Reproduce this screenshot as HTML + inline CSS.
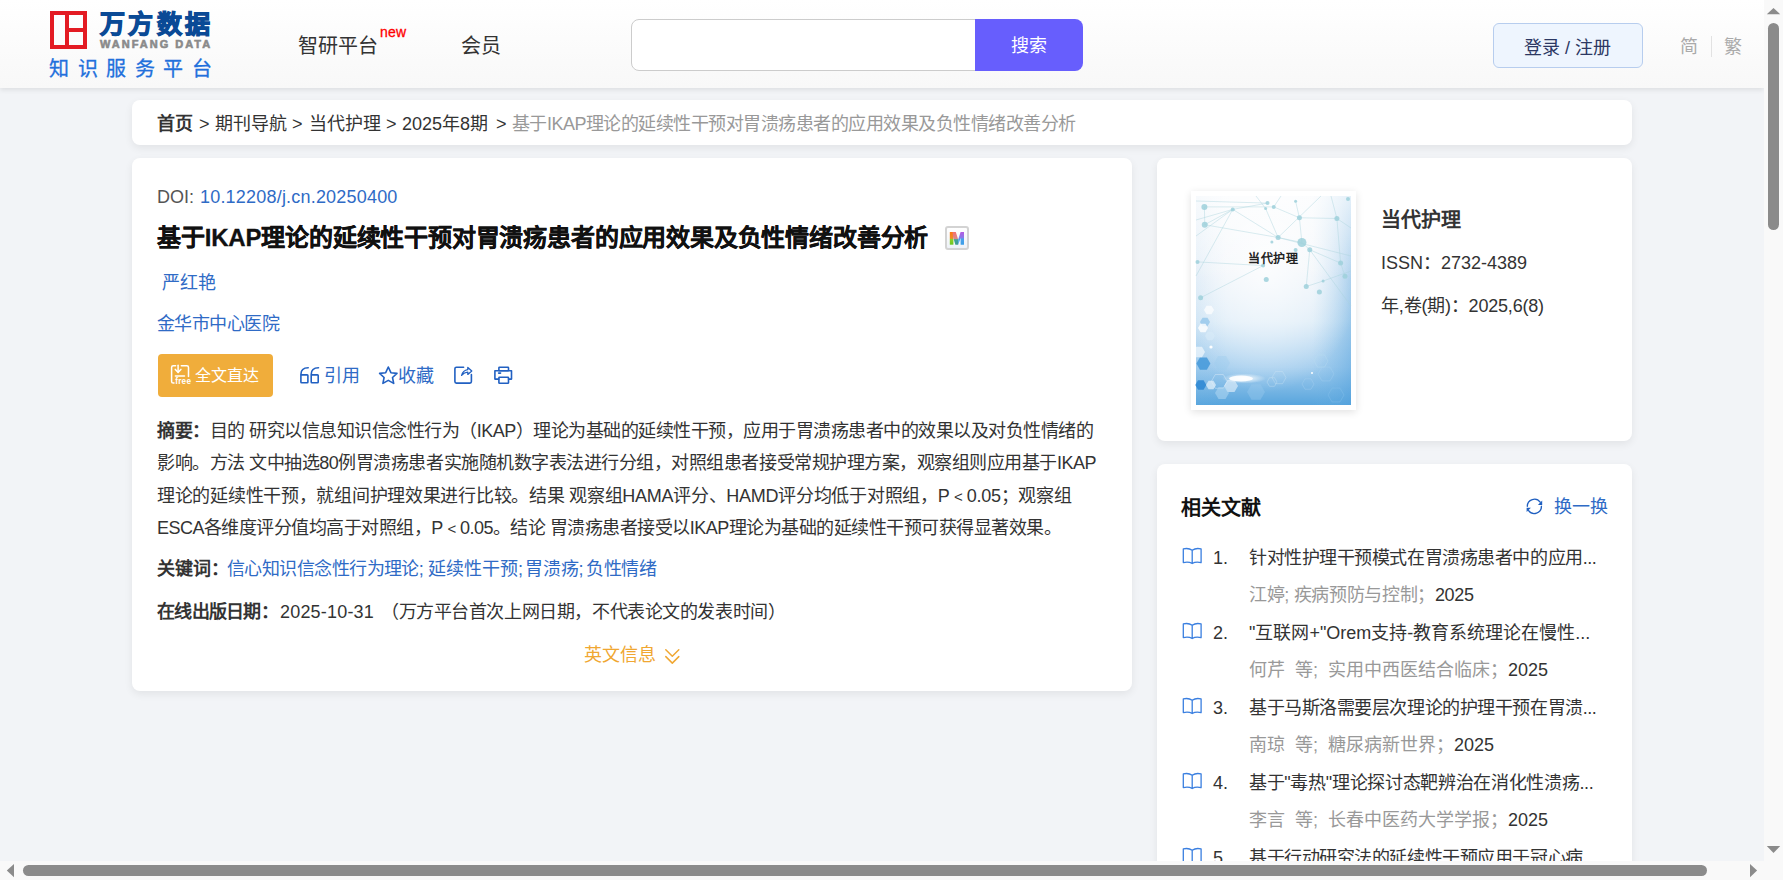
<!DOCTYPE html>
<html lang="zh-CN">
<head>
<meta charset="utf-8">
<title>万方数据</title>
<style>
*{margin:0;padding:0;box-sizing:border-box}
html,body{width:1783px;height:880px;overflow:hidden}
body{position:relative;background:#f2f4f7;font-family:"Liberation Sans",sans-serif;color:#333;font-size:18px;line-height:26px}
.a{position:absolute;white-space:nowrap}
#hdr{position:absolute;left:0;top:0;width:1764px;height:88px;background:linear-gradient(#fff,#f8f8f8);box-shadow:0 2px 5px rgba(0,0,0,.09)}
.card{position:absolute;background:#fff;border-radius:8px;box-shadow:0 3px 8px rgba(0,0,0,.07)}
.blue{color:#2f6bc6}
.b{font-weight:bold}
.gray{color:#999}
svg{position:absolute;overflow:visible}
</style>
</head>
<body>
<div id="hdr">
  <!-- logo -->
  <div class="a" style="left:50px;top:11px;width:37px;height:38px;border:4px solid #e31b23"></div>
  <div class="a" style="left:65px;top:11px;width:4px;height:38px;background:#e31b23"></div>
  <div class="a" style="left:65px;top:28px;width:22px;height:4px;background:#e31b23"></div>
  <div class="a" id="lg1" style="left:100px;top:9px;font-size:25px;line-height:30px;color:#0a4a96;font-weight:900;letter-spacing:3.4px;-webkit-text-stroke:1.2px #0a4a96">万方数据</div>
  <div class="a b" id="lg2" style="left:100px;top:38px;font-size:11px;line-height:12px;color:#8a8a8a;letter-spacing:2.0px;-webkit-text-stroke:0.6px #8a8a8a">WANFANG DATA</div>
  <div class="a" id="lg3" style="left:49px;top:57px;font-size:20px;line-height:24px;color:#2270dc;letter-spacing:8.6px;-webkit-text-stroke:0.3px #2270dc">知识服务平台</div>
  <!-- nav -->
  <div class="a" id="nav1" style="left:298px;top:32px;font-size:20px;line-height:28px;color:#333">智研平台</div>
  <div class="a" id="nnew" style="left:380px;top:24px;font-size:14px;line-height:16px;color:#f00;-webkit-text-stroke:0.3px #f00;letter-spacing:0.2px">new</div>
  <div class="a" id="nav2" style="left:461px;top:32px;font-size:20px;line-height:28px;color:#333">会员</div>
  <!-- search -->
  <div class="a" style="left:631px;top:19px;width:352px;height:52px;border:1px solid #ccc;border-radius:8px 0 0 8px;background:#fff"></div>
  <div class="a" style="left:975px;top:19px;width:108px;height:52px;background:#675efd;border-radius:0 8px 8px 0"></div>
  <div class="a" id="stxt" style="left:1011px;top:33px;color:#fff">搜索</div>
  <!-- login -->
  <div class="a" style="left:1493px;top:23px;width:150px;height:45px;background:#eef5fe;border:1px solid #b7cdee;border-radius:6px"></div>
  <div class="a" id="ltxt" style="left:1524px;top:35px;color:#2c3863">登录 / 注册</div>
  <div class="a" id="jian" style="left:1680px;top:34px;color:#aaa">简</div>
  <div class="a" style="left:1711px;top:36px;width:1px;height:21px;background:#e2e2e2"></div>
  <div class="a" id="fan" style="left:1724px;top:34px;color:#aaa">繁</div>
</div>

<!-- breadcrumb -->
<div class="card" style="left:132px;top:100px;width:1500px;height:45px"></div>
<div class="a b" id="bc1" style="left:157px;top:111px">首页</div>
<div class="a" id="bc2" style="left:199px;top:111px">&gt;</div>
<div class="a" id="bc3" style="left:215px;top:111px">期刊导航</div>
<div class="a" id="bc4" style="left:292px;top:111px">&gt;</div>
<div class="a" id="bc5" style="left:309px;top:111px">当代护理</div>
<div class="a" id="bc6" style="left:386px;top:111px">&gt;</div>
<div class="a" id="bc7" style="left:402px;top:111px">2025年8期</div>
<div class="a" id="bc8" style="left:496px;top:111px">&gt;</div>
<div class="a gray" id="bc9" style="left:512px;top:111px;letter-spacing:-0.515px">基于IKAP理论的延续性干预对胃溃疡患者的应用效果及负性情绪改善分析</div>

<!-- main card -->
<div class="card" style="left:132px;top:158px;width:1000px;height:533px"></div>
<div class="a" id="doi1" style="left:157px;top:184px;color:#555">DOI:</div>
<div class="a blue" id="doi2" style="left:200px;top:184px;letter-spacing:0.2px">10.12208/j.cn.20250400</div>
<div class="a b" id="title" style="left:157px;top:222px;letter-spacing:-0.18px;font-size:24px;line-height:32px;color:#111;-webkit-text-stroke:0.3px #111">基于IKAP理论的延续性干预对胃溃疡患者的应用效果及负性情绪改善分析</div>
<div class="a" id="mic" style="left:945px;top:226px;width:24px;height:24px;border:2px solid #d3d3d3;border-radius:3px;background:linear-gradient(#fff,#eef2f8)"></div>
<div class="a blue" id="author" style="left:162px;top:270px">严红艳</div>
<div class="a blue" id="org" style="left:157px;top:311px;letter-spacing:-0.53px">金华市中心医院</div>

<div class="a" style="left:158px;top:354px;width:115px;height:43px;background:#f0ad3b;border-radius:4px"></div>
<div class="a" id="ftxt" style="left:195px;top:364px;font-size:16px;line-height:24px;color:#fff">全文直达</div>
<div class="a blue" id="cite" style="left:324px;top:363px">引用</div>
<div class="a blue" id="fav" style="left:398px;top:363px">收藏</div>


<!-- icons main -->
<svg id="ico-free" style="left:0;top:0" width="1" height="1">
  <g fill="none" stroke="#fff" stroke-width="1.5" stroke-linecap="round">
    <path d="M175.6 365.8H173.3Q171.6 365.8 171.6 367.5V381.4Q171.6 383.1 173.3 383.1H174"/>
    <path d="M181.3 365.8H186.8Q188.5 365.8 188.5 367.5V376.4"/>
    <path d="M178.1 365.3V372"/>
    <path d="M175.3 369.4L178.1 372.3L180.9 369.4"/>
    <path d="M175.4 375.9H184.5"/>
  </g>
  <text x="175.2" y="384.3" font-family="Liberation Sans" font-weight="bold" font-size="8.2" fill="#fff" letter-spacing="0.25">free</text>
</svg>
<svg style="left:0;top:0" width="1" height="1">
  <g fill="none" stroke="#2160c2" stroke-width="1.6" stroke-linejoin="round" stroke-linecap="round">
    <path d="M301 374.9H307.2Q307.9 374.9 307.9 375.6V382Q307.9 382.7 307.2 382.7H301.6Q300.9 382.7 300.9 382V374.5Q300.9 367.8 308.2 367.8"/>
    <path d="M311.3 374.9H317.5Q318.2 374.9 318.2 375.6V382Q318.2 382.7 317.5 382.7H311.9Q311.2 382.7 311.2 382V374.5Q311.2 367.8 318.5 367.8"/>
    <path d="M388.3 367L390.9 372.7L397 373.4L392.5 377.5L393.7 383.4L388.3 380.4L382.9 383.4L384.1 377.5L379.6 373.4L385.7 372.7Z"/>
    <path d="M463.6 367.2H456.4Q454.9 367.2 454.9 368.7V381.6Q454.9 383.1 456.4 383.1H469.9Q471.4 383.1 471.4 381.6V374.6"/>
    <path d="M461.6 375.4Q463 370.2 467.8 369.6V367.4L471.8 370.9L467.8 374.4V372.1Q464.3 372.3 461.6 375.4Z" stroke-width="1.3"/>
    <rect x="498.9" y="367.2" width="9.6" height="3.6" rx="0.6"/>
    <path d="M498.9 379.1H494.9V370.8H511.5V379.1H508.5"/>
    <rect x="498.9" y="377.2" width="9.6" height="6.1" rx="0.6"/>
    <path d="M498.6 373.1H500.6"/>
  </g>
</svg>
<svg style="left:0;top:0" width="1" height="1">
  <g fill="none" stroke="#f0a732" stroke-width="1.5" stroke-linecap="round" stroke-linejoin="round">
    <path d="M665.8 649.8L672.3 656.2L678.8 649.8"/>
    <path d="M665.8 656.6L672.3 663.1L678.8 656.6"/>
  </g>
</svg>
<svg style="left:0;top:0" width="1" height="1">
  <defs>
    <linearGradient id="mg1" x1="0" y1="0" x2="0" y2="1"><stop offset="0" stop-color="#fb7a12"/><stop offset=".5" stop-color="#f08a2a"/><stop offset=".55" stop-color="#8fd12a"/><stop offset="1" stop-color="#6cc71f"/></linearGradient>
    <linearGradient id="mg2" x1="0" y1="0" x2="0" y2="1"><stop offset="0" stop-color="#f56f6f"/><stop offset=".55" stop-color="#d88a8a"/><stop offset=".6" stop-color="#3fa39a"/><stop offset="1" stop-color="#3c9a8f"/></linearGradient>
    <linearGradient id="mg3" x1="0" y1="0" x2="0" y2="1"><stop offset="0" stop-color="#b45be2"/><stop offset=".45" stop-color="#8a78e8"/><stop offset=".55" stop-color="#4aa0ea"/><stop offset="1" stop-color="#3b9ee8"/></linearGradient>
  </defs>
  <path d="M949.8 232H953.4V244.7H949.8Z" fill="url(#mg1)"/>
  <path d="M952.5 232H955.8L958.2 239.5L958.2 244.7H955.4L953 237Z" fill="url(#mg2)"/>
  <path d="M960.6 232H964V244.7H960.6V238L958.2 244.7V239.5Z" fill="url(#mg3)"/>
</svg>

<div class="a" id="ab1" style="left:157px;top:418px;letter-spacing:-0.494px"><span class="b">摘要：</span>目的 研究以信息知识信念性行为（IKAP）理论为基础的延续性干预，应用于胃溃疡患者中的效果以及对负性情绪的</div>
<div class="a" id="ab2" style="left:157px;top:450px;letter-spacing:-0.473px">影响。方法 文中抽选80例胃溃疡患者实施随机数字表法进行分组，对照组患者接受常规护理方案，观察组则应用基于IKAP</div>
<div class="a" id="ab3" style="left:157px;top:483px;letter-spacing:-0.284px">理论的延续性干预，就组间护理效果进行比较。结果 观察组HAMA评分、HAMD评分均低于对照组，P<span style="font-size:15px;margin:0 4.2px 0 4.7px">&lt;</span>0.05；观察组</div>
<div class="a" id="ab4" style="left:157px;top:515px;letter-spacing:-0.51px">ESCA各维度评分值均高于对照组，P<span style="font-size:15px;margin:0 4.2px 0 4.7px">&lt;</span>0.05。结论 胃溃疡患者接受以IKAP理论为基础的延续性干预可获得显著效果。</div>

<div class="a b" id="kw0" style="left:157px;top:556px">关键词：</div>
<div class="a blue" id="kw1" style="left:227px;top:556px;letter-spacing:-0.56px">信心知识信念性行为理论;</div>
<div class="a blue" id="kw2" style="left:428px;top:556px">延续性干预;</div>
<div class="a blue" id="kw3" style="left:524.5px;top:556px">胃溃疡;</div>
<div class="a blue" id="kw4" style="left:586px;top:556px;letter-spacing:-0.4px">负性情绪</div>
<div class="a b" id="dt0" style="left:157px;top:599px;letter-spacing:-0.73px">在线出版日期：</div>
<div class="a" id="dt1" style="left:280px;top:599px;letter-spacing:0.19px">2025-10-31</div>
<div class="a" id="dt2" style="left:381px;top:599px;letter-spacing:-0.42px">（万方平台首次上网日期，不代表论文的发表时间）</div>
<div class="a" id="eng" style="left:584px;top:642px;color:#f0a732">英文信息</div>

<!-- right card 1 -->
<div class="card" style="left:1157px;top:158px;width:475px;height:283px"></div>
<div class="a" id="cover" style="left:1191px;top:191px;width:165px;height:219px;background:#fff;box-shadow:0 2px 8px rgba(0,0,0,.12)"></div>
<svg style="left:1196px;top:196px" width="155" height="209" viewBox="0 0 155 209"><defs><linearGradient id="cg" x1="0" y1="0" x2="0" y2="1"><stop offset="0" stop-color="#f1f5fa"/><stop offset=".35" stop-color="#ebf1f8"/><stop offset=".6" stop-color="#d6e8f6"/><stop offset=".82" stop-color="#a3cdee"/><stop offset="1" stop-color="#58a5dd"/></linearGradient><radialGradient id="cg2" cx=".45" cy=".32" r=".62"><stop offset="0" stop-color="#fff" stop-opacity=".85"/><stop offset=".55" stop-color="#fff" stop-opacity=".45"/><stop offset="1" stop-color="#fff" stop-opacity="0"/></radialGradient><linearGradient id="cg4" x1="0" y1="0" x2="1" y2="0"><stop offset="0" stop-color="#6eb3e4" stop-opacity=".12"/><stop offset=".2" stop-color="#6eb3e4" stop-opacity="0"/><stop offset=".75" stop-color="#6eb3e4" stop-opacity="0"/><stop offset="1" stop-color="#4f9fdc" stop-opacity=".45"/></linearGradient><linearGradient id="cg5" x1="0" y1="0" x2="0" y2="1"><stop offset="0" stop-color="#fff" stop-opacity="1"/><stop offset=".4" stop-color="#fff" stop-opacity="0"/></linearGradient><radialGradient id="cg3" cx=".5" cy=".5" r=".5"><stop offset="0" stop-color="#fff" stop-opacity=".95"/><stop offset="1" stop-color="#fff" stop-opacity="0"/></radialGradient></defs><rect width="155" height="209" fill="url(#cg)"/><rect width="155" height="209" fill="url(#cg4)"/><rect width="155" height="209" fill="url(#cg2)"/><rect width="155" height="209" fill="url(#cg5)" opacity=".7"/><g stroke="#a9d3dc" stroke-width=".8" stroke-opacity=".55"><line x1="0" y1="5" x2="71.5" y2="7.1"/><line x1="8.4" y1="10.9" x2="8.75" y2="28.75"/><line x1="8.75" y1="28.75" x2="36.75" y2="13.4"/><line x1="36.75" y1="13.4" x2="71.5" y2="7.1"/><line x1="36.75" y1="13.4" x2="82.1" y2="41.5"/><line x1="8.75" y1="28.75" x2="82.1" y2="41.5"/><line x1="0" y1="80" x2="36.75" y2="13.4"/><line x1="69.6" y1="12.5" x2="82.1" y2="41.5"/><line x1="77.75" y1="10.9" x2="103.4" y2="21.75"/><line x1="99.6" y1="5.25" x2="103.4" y2="21.75"/><line x1="103.4" y1="21.75" x2="140.9" y2="22.5"/><line x1="82.1" y1="41.5" x2="125" y2="0"/><line x1="103.4" y1="21.75" x2="105.9" y2="46.5"/><line x1="105.9" y1="46.5" x2="113.75" y2="53.75"/><line x1="113.75" y1="53.75" x2="144.6" y2="67.1"/><line x1="113.75" y1="53.75" x2="110.25" y2="90.5"/><line x1="110.25" y1="90.5" x2="127.1" y2="85"/><line x1="1.5" y1="65.9" x2="67.1" y2="69.6"/><line x1="4.6" y1="101.75" x2="67.1" y2="69.6"/><line x1="140.9" y1="22.5" x2="155" y2="32"/><line x1="82.1" y1="41.5" x2="155" y2="60"/><line x1="8.4" y1="10.9" x2="77.75" y2="10.9"/><line x1="36.75" y1="13.4" x2="0" y2="24"/><line x1="140.9" y1="22.5" x2="144.6" y2="67.1"/><line x1="113.75" y1="53.75" x2="155" y2="110"/><line x1="69.6" y1="12.5" x2="60" y2="0"/><line x1="77.75" y1="10.9" x2="85" y2="0"/><line x1="140.9" y1="22.5" x2="135" y2="0"/><line x1="105.9" y1="46.5" x2="82.1" y2="41.5"/><line x1="0" y1="40" x2="36.75" y2="13.4"/><line x1="144.6" y1="67.1" x2="149" y2="80.25"/><line x1="127.1" y1="85" x2="155" y2="75"/></g><g fill="#9dd0da" fill-opacity=".85"><circle cx="8.4" cy="10.9" r="3"/><circle cx="8.75" cy="28.75" r="3"/><circle cx="36.75" cy="13.4" r="2"/><circle cx="71.5" cy="7.1" r="2"/><circle cx="77.75" cy="10.9" r="2"/><circle cx="69.6" cy="12.5" r="1.5"/><circle cx="99.6" cy="5.25" r="1.5"/><circle cx="103.4" cy="21.75" r="2.5"/><circle cx="140.9" cy="22.5" r="2.5"/><circle cx="82.1" cy="41.5" r="2.5"/><circle cx="75.9" cy="45.9" r="1.5"/><circle cx="105.9" cy="46.5" r="4.5"/><circle cx="113.75" cy="53.75" r="2.5"/><circle cx="99.6" cy="54" r="2"/><circle cx="1.5" cy="65.9" r="2"/><circle cx="67.1" cy="69.6" r="2"/><circle cx="70.25" cy="83.4" r="2.5"/><circle cx="110.25" cy="90.5" r="2.5"/><circle cx="127.1" cy="85" r="1.5"/><circle cx="123.4" cy="95.9" r="2.5"/><circle cx="144.6" cy="67.1" r="2.5"/><circle cx="149" cy="80.25" r="2.5"/><circle cx="4.6" cy="101.75" r="2.5"/><circle cx="152" cy="3" r="2"/></g><polygon points="18.0,114.0 15.5,118.3 10.5,118.3 8.0,114.0 10.5,109.7 15.5,109.7" fill="#fff" fill-opacity="0.7"/><polygon points="14.0,126.0 11.5,130.3 6.5,130.3 4.0,126.0 6.5,121.7 11.5,121.7" fill="#8cc2ea" fill-opacity="0.7"/><polygon points="12.0,132.0 9.5,136.3 4.5,136.3 2.0,132.0 4.5,127.7 9.5,127.7" fill="#fff" fill-opacity="0.8"/><polygon points="19.0,140.0 16.5,144.3 11.5,144.3 9.0,140.0 11.5,135.7 16.5,135.7" fill="#d8ebf8" fill-opacity="0.6"/><polygon points="14.4,167.6 10.9,173.7 3.9,173.7 0.4,167.6 3.9,161.5 10.9,161.5" fill="#3d95d8" fill-opacity="0.8"/><polygon points="34.0,167.0 30.0,173.9 22.0,173.9 18.0,167.0 22.0,160.1 30.0,160.1" fill="#9ccbee" fill-opacity="0.35"/><polygon points="10.3,189.0 7.6,193.8 2.1,193.8 -0.7,189.0 2.0,184.2 7.6,184.2" fill="#2a86d2" fill-opacity="0.85"/><polygon points="20.0,189.0 17.5,193.3 12.5,193.3 10.0,189.0 12.5,184.7 17.5,184.7" fill="#e8f3fb" fill-opacity="0.7"/><polygon points="31.3,185.4 27.3,192.3 19.3,192.3 15.3,185.4 19.3,178.5 27.3,178.5" fill="none" stroke="#e6f1fa" stroke-width=".8" stroke-opacity=".5"/><polygon points="42.0,190.0 38.5,196.1 31.5,196.1 28.0,190.0 31.5,183.9 38.5,183.9" fill="#eaf4fb" fill-opacity="0.6"/><polygon points="33.0,197.0 29.5,203.1 22.5,203.1 19.0,197.0 22.5,190.9 29.5,190.9" fill="#b8dbf3" fill-opacity="0.5"/><polygon points="9.0,156.0 6.0,161.2 0.0,161.2 -3.0,156.0 -0.0,150.8 6.0,150.8" fill="#fff" fill-opacity="0.6"/><polygon points="90.0,181.6 86.5,187.7 79.5,187.7 76.0,181.6 79.5,175.5 86.5,175.5" fill="none" stroke="#cfe5f5" stroke-width=".8" stroke-opacity=".45"/><polygon points="81.0,186.0 78.5,190.3 73.5,190.3 71.0,186.0 73.5,181.7 78.5,181.7" fill="none" stroke="#cfe5f5" stroke-width=".8" stroke-opacity=".45"/><polygon points="132.0,165.0 128.5,171.1 121.5,171.1 118.0,165.0 121.5,158.9 128.5,158.9" fill="none" stroke="#bcdcf2" stroke-width=".8" stroke-opacity=".45"/><polygon points="138.0,178.0 134.0,184.9 126.0,184.9 122.0,178.0 126.0,171.1 134.0,171.1" fill="none" stroke="#a9d2f0" stroke-width=".8" stroke-opacity=".45"/><polygon points="118.0,188.0 115.0,193.2 109.0,193.2 106.0,188.0 109.0,182.8 115.0,182.8" fill="none" stroke="#aad3f0" stroke-width=".8" stroke-opacity=".45"/><polygon points="69.0,196.0 64.5,203.8 55.5,203.8 51.0,196.0 55.5,188.2 64.5,188.2" fill="#9ccbee" fill-opacity="0.4"/><polygon points="148.0,199.0 144.0,205.9 136.0,205.9 132.0,199.0 136.0,192.1 144.0,192.1" fill="none" stroke="#8cc4ec" stroke-width=".8" stroke-opacity=".45"/><ellipse cx="48" cy="182.5" rx="22" ry="5" fill="url(#cg3)"/><ellipse cx="45" cy="182.5" rx="12" ry="3" fill="#fff" fill-opacity=".9"/><circle cx="15" cy="151" r="1.6" fill="#fff"/><circle cx="116" cy="177" r="1" fill="#fff"/></svg>
<div class="a b" id="ctitle" style="left:1248px;top:250px;letter-spacing:.6px;font-size:12px;line-height:18px;color:#222">当代护理</div>
<div class="a b" id="jname" style="left:1381px;top:206px;font-size:20px;line-height:28px;color:#333">当代护理</div>
<div class="a" id="issn" style="left:1381px;top:250px">ISSN：2732-4389</div>
<div class="a" id="vol" style="left:1381px;top:293px;letter-spacing:-0.2px">年,卷(期)：2025,6(8)</div>

<!-- right card 2 -->
<div class="card" style="left:1157px;top:464px;width:475px;height:420px"></div>
<div class="a b" id="rel" style="left:1181px;top:494px;font-size:20px;line-height:28px;color:#111">相关文献</div>
<div class="a blue" id="swap" style="left:1554px;top:494px">换一换</div>


<svg style="left:0;top:0" width="1" height="1">
  <g fill="none" stroke="#1f5fc0" stroke-width="1.35" stroke-linecap="round">
    <path d="M1527.3 506.3A7.1 7.1 0 0 1 1540.2 502.2"/>
    <path d="M1541.4 506.3A7.1 7.1 0 0 1 1528.6 510.6"/>
  </g>
  <g fill="#1f5fc0">
    <path d="M1542.2 500.6V504.9H1537.9Z"/>
    <path d="M1526.6 512V507.7H1530.9Z"/>
  </g>
</svg>
<svg style="left:0;top:0" width="1" height="1">
  <defs>
    <g id="book" fill="none" stroke="#3a7fe0" stroke-width="1.3" stroke-linejoin="round">
      <path d="M1192.2 550.3Q1188.6 547.6 1183.3 548.9V562.6Q1188.6 561.3 1192.2 563.5Q1195.8 561.3 1201.1 562.6V548.9Q1195.8 547.6 1192.2 550.3V563.5"/>
    </g>
  </defs>
  <use href="#book"/>
  <use href="#book" y="75"/>
  <use href="#book" y="150"/>
  <use href="#book" y="225"/>
  <use href="#book" y="300"/>
</svg>
<div class="a" id="n1" style="left:1213px;top:545px;color:#333">1.</div>
<div class="a" id="t1" style="left:1249px;top:545px;color:#333;letter-spacing:-0.44px">针对性护理干预模式在胃溃疡患者中的应用...</div>
<div class="a" id="u1" style="left:1249px;top:582px;letter-spacing:-0.34px"><span class="gray">江婷; 疾病预防与控制；</span>2025</div>
<div class="a" id="n2" style="left:1213px;top:620px;color:#333">2.</div>
<div class="a" id="t2" style="left:1249px;top:620px;color:#333">"互联网+"Orem支持-教育系统理论在慢性...</div>
<div class="a" id="u2" style="left:1249px;top:657px"><span class="gray">何芹&nbsp; 等;&nbsp; 实用中西医结合临床；</span>2025</div>
<div class="a" id="n3" style="left:1213px;top:695px;color:#333">3.</div>
<div class="a" id="t3" style="left:1249px;top:695px;color:#333;letter-spacing:-0.44px">基于马斯洛需要层次理论的护理干预在胃溃...</div>
<div class="a" id="u3" style="left:1249px;top:732px"><span class="gray">南琼&nbsp; 等;&nbsp; 糖尿病新世界；</span>2025</div>
<div class="a" id="n4" style="left:1213px;top:770px;color:#333">4.</div>
<div class="a" id="t4" style="left:1249px;top:770px;color:#333;letter-spacing:-0.32px">基于"毒热"理论探讨态靶辨治在消化性溃疡...</div>
<div class="a" id="u4" style="left:1249px;top:807px"><span class="gray">李言&nbsp; 等;&nbsp; 长春中医药大学学报；</span>2025</div>
<div class="a" id="n5" style="left:1213px;top:845px;color:#333">5.</div>
<div class="a" id="t5" style="left:1249px;top:845px;color:#333;letter-spacing:-0.44px">基于行动研究法的延续性干预应用于冠心病...</div>

<!-- scrollbars -->
<div class="a" style="left:1764px;top:0;width:19px;height:880px;background:#f9f9f9"></div>
<div class="a" style="left:0;top:861px;width:1783px;height:19px;background:#f9f9f9"></div>
<div class="a" style="left:1768px;top:23px;width:11px;height:207px;background:#8b8b8b;border-radius:6px"></div>
<div class="a" style="left:23px;top:865px;width:1684px;height:11px;background:#8b8b8b;border-radius:6px"></div>
<svg style="left:0;top:0" width="1" height="1"><g fill="#8b8b8b">
<path d="M1773.5 8L1780.2 14.3H1766.8Z"/>
<path d="M1773.5 853L1780.2 846H1766.8Z"/>
<path d="M6.8 870.6L14 864V877.2Z"/>
<path d="M1757.1 870.6L1750 864V877.2Z"/>
</g></svg>
</body>
</html>
